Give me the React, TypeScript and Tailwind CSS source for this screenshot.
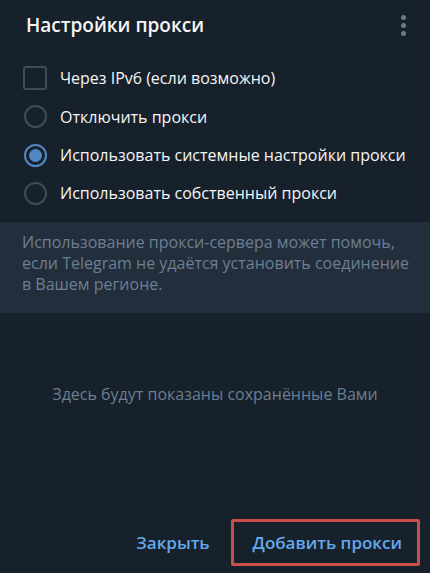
import React from "react";

const font = { fontFamily: '"Open Sans", "Noto Sans", sans-serif' };

function Radio({ checked }: { checked?: boolean }) {
  return (
    <div
      className={
        "w-[23px] h-[23px] rounded-full border-2 flex items-center justify-center shrink-0 " +
        (checked ? "border-[#5288c1]" : "border-[#3f4b58]")
      }
    >
      {checked && <div className="w-[13px] h-[13px] rounded-full bg-[#5288c1]" />}
    </div>
  );
}

export default function App() {
  return (
    <div
      className="w-[430px] h-[573px] bg-[#17212b] flex flex-col text-[#f5f5f5] overflow-hidden"
      style={font}
    >
      <div className="h-[50px] flex items-center justify-between pl-[26px] pr-[24px]">
        <div className="text-[19px] font-semibold leading-none pt-[1px]">Настройки прокси</div>
        <div className="flex flex-col gap-[3px] items-center">
          <div className="w-[5px] h-[5px] rounded-full bg-[#6d7b89]" />
          <div className="w-[5px] h-[5px] rounded-full bg-[#6d7b89]" />
          <div className="w-[5px] h-[5px] rounded-full bg-[#6d7b89]" />
        </div>
      </div>
      <div className="pt-[9px] flex flex-col">
        <div className="h-[38px] flex items-center pl-[23px] gap-[13px]">
          <div className="w-[24px] h-[24px] rounded-[3px] border-2 border-[#3f4b58] shrink-0" />
          <div className="text-[16px]">Через IPv6 (если возможно)</div>
        </div>
        <div className="h-[39px] flex items-center pl-[24px] gap-[13px]">
          <Radio />
          <div className="text-[16px]">Отключить прокси</div>
        </div>
        <div className="h-[38px] flex items-center pl-[24px] gap-[13px]">
          <Radio checked />
          <div className="text-[16px]">Использовать системные настройки прокси</div>
        </div>
        <div className="h-[38px] flex items-center pl-[24px] gap-[13px]">
          <Radio />
          <div className="text-[16px]">Использовать собственный прокси</div>
        </div>
      </div>
      <div className="mt-[10px] h-[91px] bg-[#232e3c] pl-[22px] pr-[8px] pt-[10px] text-[16px] leading-[21px] text-[#6c7e91]">
        Использование прокси-сервера может помочь, если Telegram не удаётся установить соединение в Вашем регионе.
      </div>
      <div className="flex-1 flex items-center justify-center text-[16px] text-[#6c7e91] pb-[38px]">
        Здесь будут показаны сохранённые Вами
      </div>
      <div className="h-[60px] flex items-center justify-end pr-[10px] pb-[2px] gap-[21px]">
        <div className="text-[17px] font-semibold text-[#64a9eb] pt-[2px]">Закрыть</div>
        <div className="h-[47px] pl-[19px] pr-[15px] pt-[2px] flex items-center border-[3px] border-[#c9504a] rounded-[2px] text-[17px] font-semibold text-[#64a9eb]">
          Добавить прокси
        </div>
      </div>
    </div>
  );
}
